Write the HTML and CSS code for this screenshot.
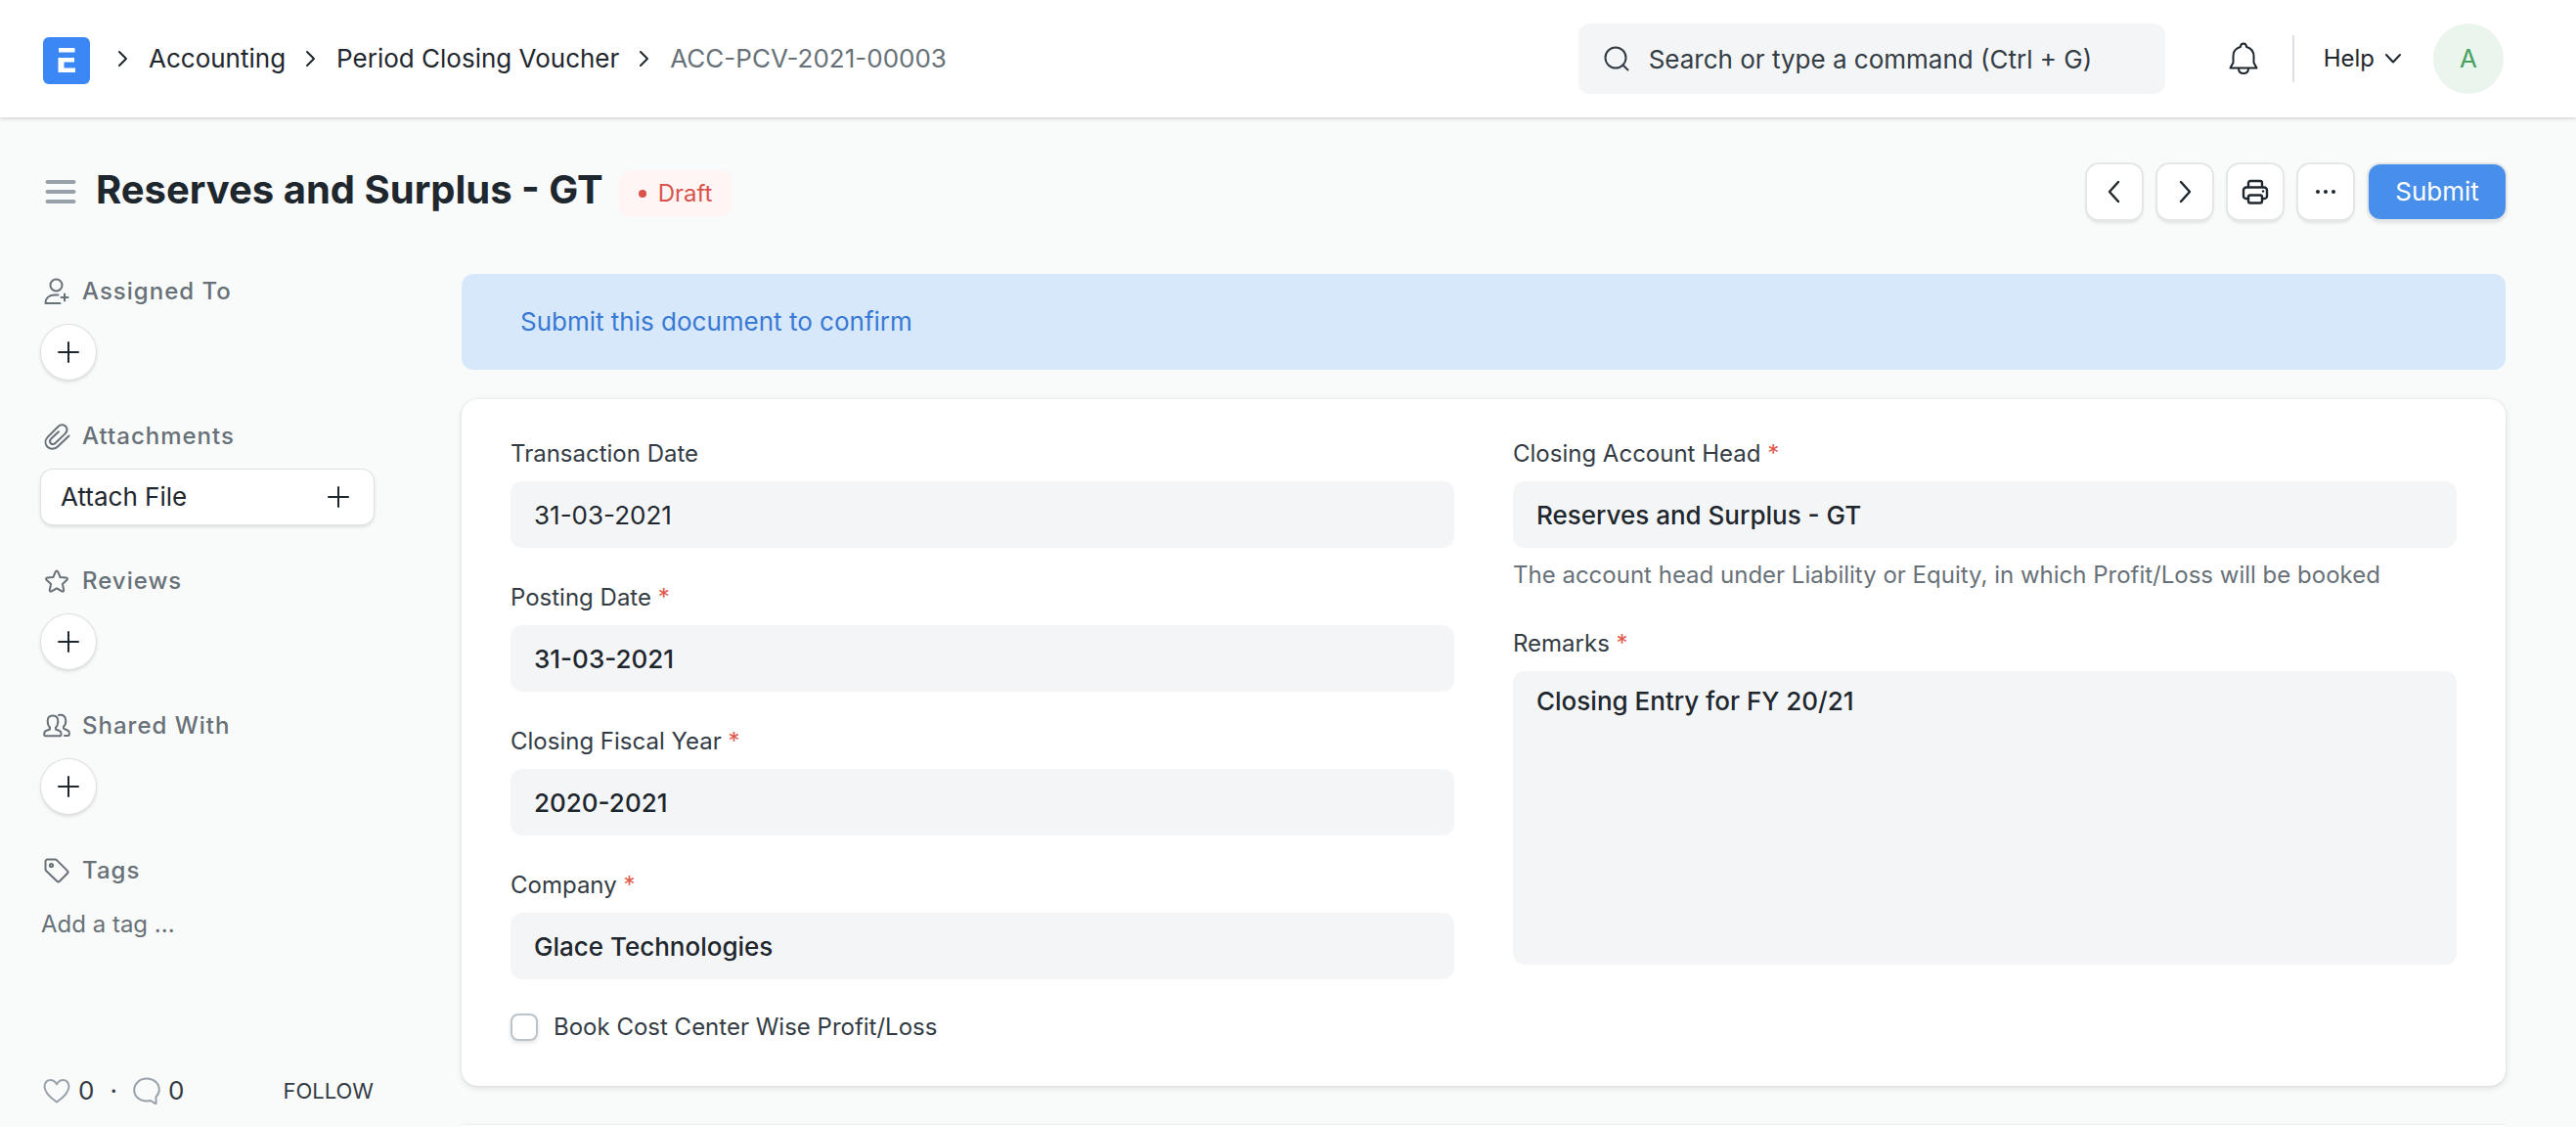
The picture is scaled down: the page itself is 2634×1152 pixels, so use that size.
FILE: index.html
```html
<!DOCTYPE html>
<html lang="en">
<head>
<meta charset="utf-8">
<meta name="viewport" content="width=device-width, initial-scale=1">
<title>Reserves and Surplus - GT</title>
<link rel="stylesheet" href="styles.css">
</head>
<body>
<svg class="sprite" aria-hidden="true">
  <symbol id="sep" viewBox="0 0 12 20"><path d="M2 3l7 7-7 7"/></symbol>
  <symbol id="plus" viewBox="0 0 24 24"><path d="M12 2v20M2 12h20"/></symbol>
</svg>
<header class="navbar">
  <nav class="crumbs" aria-label="Breadcrumb">
    <a class="logo" href="#" aria-label="Home">
      <svg viewBox="0 0 48 48"><rect width="48" height="48" rx="6" fill="#3b87f6"/><path d="M16 11h16.500v4.500H16zM15.500 21H32v4.500H21.500v6H33V36H15.500z" fill="#fff"/></svg>
    </a>
    <svg class="sep"><use href="#sep"/></svg>
    <a href="#">Accounting</a>
    <svg class="sep"><use href="#sep"/></svg>
    <a href="#">Period Closing Voucher</a>
    <svg class="sep"><use href="#sep"/></svg>
    <a class="current" href="#">ACC-PCV-2021-00003</a>
  </nav>
  <div class="tools">
    <label class="search">
      <svg viewBox="0 0 26 26"><circle cx="12" cy="12" r="10.500"/><path d="M19.500 19.500l5 5"/></svg>
      <input type="text" aria-label="Search" placeholder="Search or type a command (Ctrl + G)">
    </label>
    <button class="bell" type="button" aria-label="Notifications">
      <svg viewBox="0 0 32 34"><path d="M5.500 21V14.500C5.500 9.500 8.500 6.300 12.800 5c.3-2.200 1.500-3.500 3.200-3.500S18.900 2.800 19.200 5c4.300 1.300 7.300 4.500 7.300 9.500V21l3 5.500h-27zM11 27c0 3 2 5 5 5s5-2 5-5"/></svg>
    </button>
    <button class="help" type="button">Help
      <svg viewBox="0 0 18 12"><path d="M2 2l7 7.500L16 2"/></svg>
    </button>
    <button class="avatar" type="button">A</button>
  </div>
</header>

<div class="page-head">
  <button class="menu" type="button" aria-label="Toggle sidebar"><svg viewBox="0 0 32 28"><path d="M2.500 4h27M2.500 14h27M2.500 24h27"/></svg></button>
  <h1>Reserves and Surplus - GT</h1>
  <span class="badge">Draft</span>
  <div class="actions">
    <button class="btn" type="button" aria-label="Previous"><svg viewBox="0 0 28 28"><path d="M18 4L9 14l9 10"/></svg></button>
    <button class="btn" type="button" aria-label="Next"><svg viewBox="0 0 28 28"><path d="M10 4l9 10-9 10"/></svg></button>
    <button class="btn" type="button" aria-label="Print"><svg viewBox="0 0 28 28"><path d="M7 9.500V5a2 2 0 012-2h10a2 2 0 012 2v4.500M7 21H4.500A2.500 2.500 0 012 18.500v-6a3 3 0 013-3h18a3 3 0 013 3v6a2.500 2.500 0 01-2.500 2.500H21"/><rect x="7" y="17.500" width="14" height="8" rx="2"/><path d="M22 13.500h.1"/></svg></button>
    <button class="btn" type="button" aria-label="More"><svg viewBox="0 0 28 28"><g fill="currentColor" stroke="none"><circle cx="6" cy="14" r="2"/><circle cx="14" cy="14" r="2"/><circle cx="22" cy="14" r="2"/></g></svg></button>
    <button class="btn primary" type="button">Submit</button>
  </div>
</div>

<div class="layout">
  <aside class="sidebar">
    <section>
      <h2><svg viewBox="0 0 28 28"><circle cx="13.500" cy="7.500" r="6"/><path d="M15.500 17.500H12c-5.500 0-9.500 3-9.500 8.500h15M22 16.500v7M18.500 20h7"/></svg>Assigned To</h2>
      <button class="add" type="button" aria-label="Assign"><svg><use href="#plus"/></svg></button>
    </section>
    <section>
      <h2><svg viewBox="0 0 28 28"><path d="M26.500 13.500L15 24.500c-3.300 3.200-7.800 3-10.500.3-2.700-2.800-2.700-7 .4-10.200L15.500 4c2.400-2.300 5.700-2.200 7.600-.2 2 2 1.900 5.200-.3 7.300L12.500 21c-1.500 1.400-3.500 1.400-4.600.2-1.200-1.300-1.100-3.200.3-4.600L16 9.200"/></svg>Attachments</h2>
      <button class="attach" type="button">Attach File<svg><use href="#plus"/></svg></button>
    </section>
    <section>
      <h2><svg viewBox="0 0 28 28"><path d="M14 3.500c.6 0 1 .4 1.200.9l2.400 5.600 6.100.6c1.200.1 1.600 1.400.8 2.200l-4.600 4.200 1.300 6c.2 1.200-.9 2-1.900 1.400L14 21.300l-5.300 3.100c-1 .6-2.100-.2-1.900-1.400l1.300-6-4.600-4.200c-.8-.8-.4-2.100.8-2.200l6.100-.6 2.400-5.600c.2-.5.600-.9 1.200-.9z"/></svg>Reviews</h2>
      <button class="add" type="button" aria-label="Add review"><svg><use href="#plus"/></svg></button>
    </section>
    <section>
      <h2><svg viewBox="0 0 28 28"><path d="M10 3.500c-3.300 0-5.300 2.300-5.300 5.500 0 3 .8 5.300 2.300 6.500v2L3 19c-1.300.5-1.800 1.400-1.800 2.800V23c0 .8.500 1.300 1.300 1.300h14.700c.8 0 1.300-.5 1.300-1.300v-1.200c0-1.400-.6-2.300-1.800-2.800L13 17.500v-2c1.500-1.200 2.300-3.500 2.300-6.500 0-3.200-2-5.500-5.300-5.500zM16 3c4.500-1 7.300 1.500 7.300 5.500 0 3-.8 5-2.300 6.200v2l4 1.800c1.300.5 1.800 1.300 1.800 2.500v1.500c0 1-.6 1.500-1.500 1.500H22"/></svg>Shared With</h2>
      <button class="add" type="button" aria-label="Share"><svg><use href="#plus"/></svg></button>
    </section>
    <section>
      <h2><svg viewBox="0 0 28 28"><path d="M2.500 4.500a2 2 0 012-2h8c.6 0 1 .2 1.400.6l11 11c.8.800.8 1.800 0 2.600l-8 8c-.8.800-1.800.8-2.600 0L3.100 14c-.4-.4-.6-.8-.6-1.400z"/><circle cx="8.500" cy="8.500" r="1.600"/></svg>Tags</h2>
      <button class="add-tag" type="button">Add a tag ...</button>
    </section>
    <div class="social">
      <button type="button" aria-label="Likes"><svg viewBox="0 0 28 28"><path d="M14 25.500C9 22 1.500 16.500 1.500 9.500 1.500 5.500 4.300 3 7.500 3c2.800 0 5 1.500 6.500 4.300C15.500 4.500 17.700 3 20.500 3c3.200 0 6 2.500 6 6.500C26.500 16.500 19 22 14 25.500z"/></svg>0</button>
      <span>·</span>
      <button type="button" aria-label="Comments"><svg viewBox="0 0 28 28"><path d="M23.500 27.500l-5.500-3.500c-1.300.3-2.600.4-4 .4C6.700 24.400 1.200 19.600 1.200 13.200S6.700 1.500 14 1.500s12.800 5 12.800 11.400c0 2.800-1.300 5.200-3.300 7.200z"/></svg>0</button>
      <button class="follow" type="button">FOLLOW</button>
    </div>
  </aside>

  <main>
    <p class="notice">Submit this document to confirm</p>
    <form class="card">
      <div class="col">
        <div class="field">
          <label for="tdate">Transaction Date</label>
          <input class="regular" id="tdate" type="text" value="31-03-2021">
        </div>
        <div class="field">
          <label for="pdate">Posting Date <i>*</i></label>
          <input id="pdate" type="text" value="31-03-2021">
        </div>
        <div class="field">
          <label for="year">Closing Fiscal Year <i>*</i></label>
          <input id="year" type="text" value="2020-2021">
        </div>
        <div class="field">
          <label for="company">Company <i>*</i></label>
          <input id="company" type="text" value="Glace Technologies">
        </div>
        <label class="check"><input type="checkbox">Book Cost Center Wise Profit/Loss</label>
      </div>
      <div class="col">
        <div class="field">
          <label for="head">Closing Account Head <i>*</i></label>
          <input id="head" type="text" value="Reserves and Surplus - GT">
          <p>The account head under Liability or Equity, in which Profit/Loss will be booked</p>
        </div>
        <div class="field">
          <label for="remarks">Remarks <i>*</i></label>
          <textarea id="remarks">Closing Entry for FY 20/21</textarea>
        </div>
      </div>
    </form>
    <div class="card-next"></div>
  </main>
</div>
</body>
</html>
```

FILE: styles.css
```css
* { box-sizing: border-box; }

body {
  margin: 0;
  min-height: 100vh;
  display: flex;
  flex-direction: column;
  background: #f9fafa;
  color: #1f272e;
  font: 400 26px/34px Inter, "Liberation Sans", sans-serif;
}

h1, h2, p { margin: 0; }
a { color: inherit; text-decoration: none; }
button, input, textarea { font: inherit; color: inherit; border: 0; padding: 0; margin: 0; background: none; }
button { display: flex; align-items: center; cursor: pointer; }
svg { flex: none; fill: none; stroke: currentColor; stroke-width: 2; stroke-linecap: round; stroke-linejoin: round; }
.sprite { position: absolute; width: 0; height: 0; }

.navbar {
  display: flex;
  justify-content: space-between;
  align-items: center;
  height: 120px;
  padding: 0 74px 0 44px;
  background: #fff;
  box-shadow: 0 1px 4px rgba(0, 0, 0, .2);
}
.crumbs { display: flex; align-items: center; gap: 20px; }
.logo { width: 48px; height: 48px; margin: 4px 8px 0 0; }
.logo svg { width: 48px; height: 48px; stroke: none; display: block; }
.sep { width: 12px; height: 20px; }
.current { color: #687178; }

.tools { display: flex; align-items: center; }
.search {
  display: flex;
  align-items: center;
  gap: 20px;
  width: 600px;
  height: 72px;
  padding: 0 26px;
  border-radius: 12px;
  background: #f4f5f6;
  color: #333c44;
}
.search svg { width: 26px; height: 26px; }
.search input { flex: 1; min-width: 0; padding-top: 2px; outline: 0; }
.search input::placeholder { color: #333c44; opacity: 1; }
.bell { margin-left: 64px; }
.bell svg { width: 32px; height: 34px; }
.help {
  gap: 10px;
  height: 48px;
  margin: 0 32px 0 34px;
  padding-left: 30px;
  border-left: 2px solid #dce0e3;
  font-size: 24px;
}
.help svg { width: 18px; height: 12px; }
.avatar {
  justify-content: center;
  width: 72px;
  height: 72px;
  border-radius: 50%;
  background: #eaf5ee;
  color: #48a15c;
}

.page-head { display: flex; align-items: center; padding: 48px 72px 56px 46px; }
.menu { margin-right: 20px; color: #98a1a9; }
.menu svg { width: 32px; height: 28px; stroke-width: 4; }
h1 { padding-bottom: 4px; font-size: 40px; line-height: 48px; font-weight: 700; }
.badge {
  display: flex;
  align-items: center;
  gap: 12px;
  height: 48px;
  margin: 4px 0 0 16px;
  padding: 0 20px;
  border-radius: 12px;
  background: #fff5f5;
  color: #d9534c;
  font-size: 24px;
}
.badge::before { content: ""; width: 8px; height: 8px; border-radius: 50%; background: #d9534c; }
.actions { display: flex; gap: 16px; margin-left: auto; }
.btn {
  justify-content: center;
  width: 56px;
  height: 56px;
  border-radius: 12px;
  background: #fff;
  box-shadow: 0 0 0 2px #e5e6e6, 0 3px 4px rgba(0, 0, 0, .14);
}
.btn svg { width: 28px; height: 28px; stroke-width: 2.4; }
.btn.primary { width: 140px; background: #478fea; color: #fff; }

.layout { flex: 1; display: grid; grid-template-columns: 340px 1fr; gap: 90px; padding: 0 72px 0 42px; }

.sidebar section { height: 148px; padding-top: 1px; }
h2 {
  display: flex;
  align-items: center;
  gap: 12px;
  height: 34px;
  margin-bottom: 17px;
  padding-left: 2px;
  color: #687178;
  font-size: 24px;
  font-weight: 500;
  letter-spacing: 1px;
}
h2 svg { width: 28px; height: 28px; }
.add, .attach {
  background: #fff;
  height: 56px;
  box-shadow: 0 0 0 1px #dfe1e2, 0 2px 4px rgba(0, 0, 0, .16);
}
.add { width: 56px; justify-content: center; border-radius: 50%; }
.add svg, .attach svg { width: 24px; height: 24px; }
.attach { width: 100%; justify-content: space-between; padding: 0 24px 0 20px; border-radius: 12px; }
.add-tag { padding-top: 4px; color: #687178; font-size: 24px; }
.social { display: flex; align-items: center; gap: 16px; margin-top: 78px; padding-left: 2px; color: #333c44; }
.social button { gap: 8px; }
.social svg { width: 28px; height: 28px; color: #98a1a9; }
.social .follow { margin-left: auto; font-size: 22px; }

main { display: flex; flex-direction: column; min-width: 0; }
.notice { padding: 32px 60px; border-radius: 12px; background: #d7e8fb; color: #3779d3; }
.card, .card-next { background: #fff; box-shadow: 0 0 2px rgba(0, 0, 0, .1), 0 2px 6px rgba(0, 0, 0, .12); }
.card {
  display: grid;
  grid-template-columns: 1fr 1fr;
  gap: 60px;
  margin: 30px 0 40px;
  padding: 39px 50px 45px;
  border-radius: 16px;
}
.card-next { flex: 1; border-radius: 16px 16px 0 0; }
.col { display: flex; flex-direction: column; gap: 34px; min-width: 0; }
.field { display: flex; flex-direction: column; }
.field label { margin-bottom: 11px; }
.field label, .field p, .check { color: #333c44; font-size: 24px; }
.field p { margin: 11px 0 2px; color: #687178; }
i { font-style: normal; color: #e2574c; }
.field input, .field textarea {
  width: 100%;
  height: 68px;
  padding: 0 24px;
  border-radius: 12px;
  background: #f4f5f6;
  font-weight: 500;
}
.field input.regular { font-weight: 400; }
.field textarea { display: block; height: 300px; padding-top: 14px; resize: none; }
.check { display: flex; align-items: center; gap: 16px; height: 30px; }
.check input {
  appearance: none;
  width: 28px;
  height: 28px;
  border: 2px solid #bcc4cb;
  border-radius: 8px;
  background: #fff;
  box-shadow: 0 2px 4px rgba(0, 0, 0, .12);
}
```
